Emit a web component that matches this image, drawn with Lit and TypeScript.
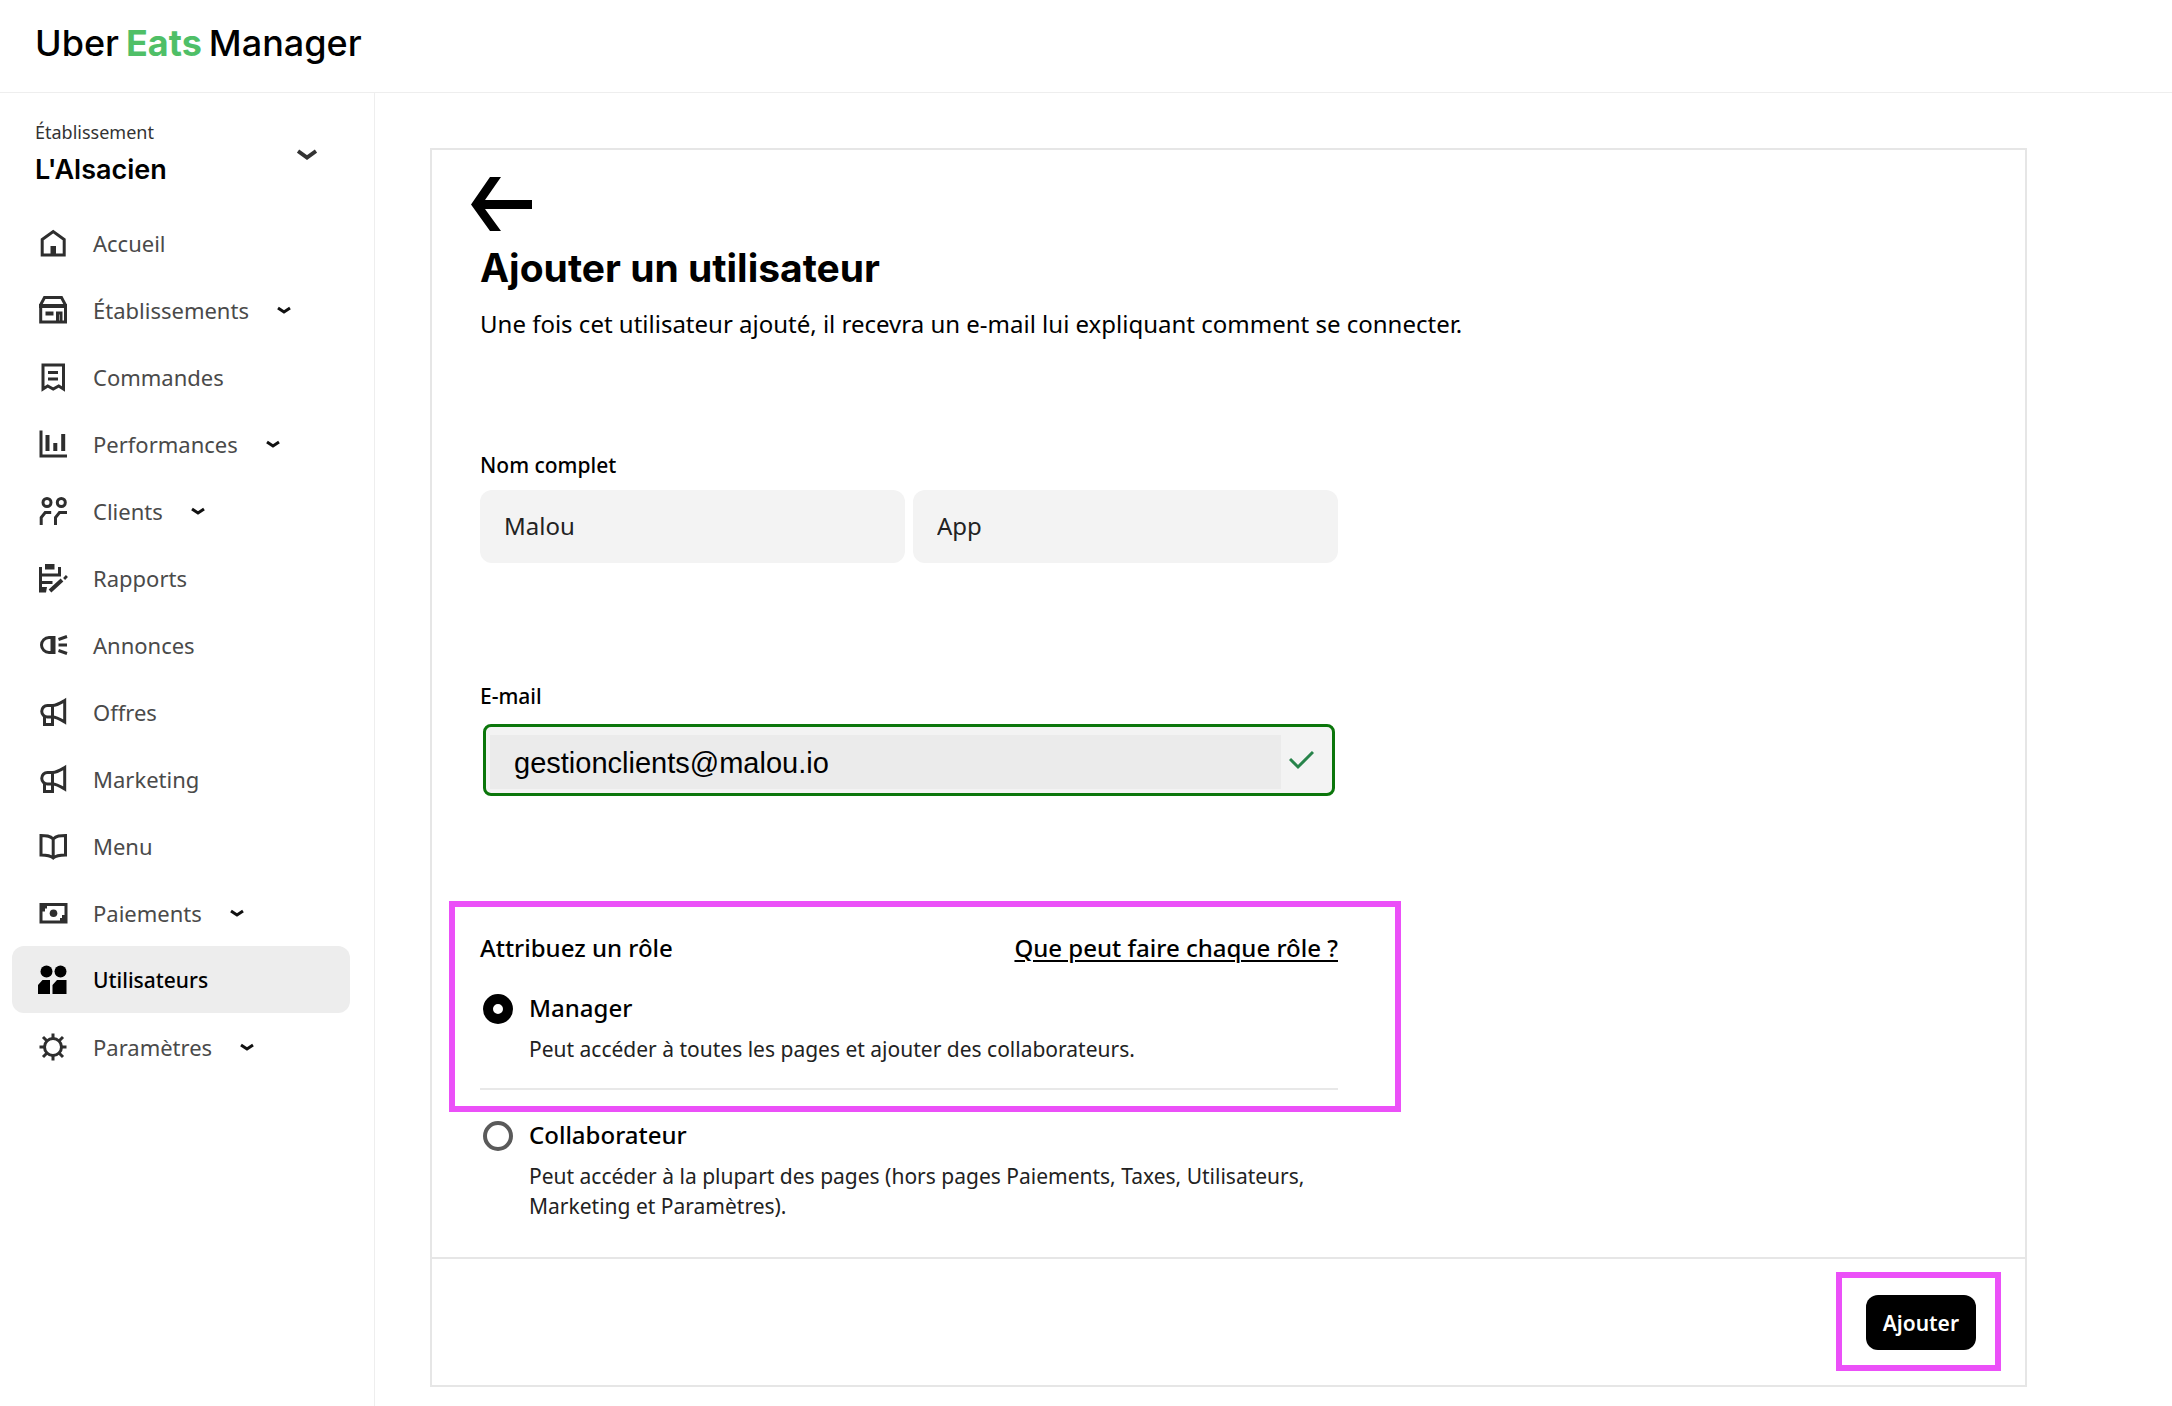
import { LitElement, html, css, svg, nothing } from "lit";
import { customElement, state } from "lit/decorators.js";
import { classMap } from "lit/directives/class-map.js";

const megaphone = svg`
  <path d="M14.500 8.500h-5a5.300 5.300 0 0 0 0 11.500h5c4 0 8 2.500 12.200 5V3.500c-4.200 2.500-8.200 5-12.200 5z" />
  <path d="M14.500 8.500v19H6.500V19.500" />
`;

const icons = {
  home: svg`<path d="M4.200 11.500 15.200 3.500l11 8v15.500h-22z" /><path class="solid" d="M12.500 18h5.500v8h-5.500z" />`,
  store: svg`
    <path d="M6.500 2.500h17l4 7.500v1h-25v-1z" />
    <path class="thick" d="M1 11h28" />
    <path d="M2.700 11v16h24.800v-16" />
    <path class="thick" d="M7.500 18.500h8" />
    <path d="M19.500 26.500V18h3.500v8.500" />
  `,
  receipt: svg`
    <path d="M5 3h20.500v24l-4.800-3-5.500 3-5.500-3-4.700 3z" />
    <path d="M10 10.500h10M10 17h10" />
  `,
  chart: svg`<path d="M3 1.500v25.500h26" /><path class="thick" d="M9.500 6v16M17.300 14v8M25.200 5v17" />`,
  people: svg`
    <circle cx="9" cy="6.500" r="4" /><circle cx="23.300" cy="6.500" r="4" />
    <path d="M3.200 29v-7.500l4-5h6M17.500 29v-7.500l4-5h7.500" />
  `,
  report: svg`
    <path d="M2.500 4v23.500M2.500 12h19V4M2.500 19.500h12" />
    <path class="solid" d="M7 1h9.500v5.500H7zM1 24h8l-1 5.500H1z" />
    <path class="thick" d="M12 28 24 17M26.500 13.500l2 2" />
  `,
  ad: svg`
    <path d="M16 7.500H11a7.500 7.500 0 0 0 0 15h5z" />
    <path class="thick" d="M14.500 7v16" />
    <path d="M20.500 9.500l8.500-3M20.500 15h8.500M20.500 20.500l8.500 3" />
  `,
  megaphone,
  book: svg`<path d="M3 4.500c5 0 9 0 12.200 3.500C18.500 4.500 22 4.500 27.500 4.500v19.500c-5 0-9 0-12.300 3C12 24 8 24 3 24zM15.200 8v18" />`,
  cash: svg`
    <path d="M3 6.500h25v17.500H3z" />
    <path class="solid" d="M3 6.500h6v4H7v3H3zM28 24h-6v-4h2v-3h4z" />
    <circle class="solid" cx="15.500" cy="15.200" r="3.800" />
  `,
  users: svg`
    <circle class="solid" cx="8.500" cy="6.500" r="6" /><circle class="solid" cx="22.500" cy="6.500" r="6" />
    <path class="solid" d="M0 29V20l4.500-5H12v14zM14.500 29V20l4.500-5h9.500v14z" />
  `,
  gear: svg`
    <circle cx="15" cy="15" r="8.500" />
    <path d="M15 1.500v5M15 23.500v5M1.500 15h5M23.500 15h5M5 5l4 4M21 21l4 4M5 25l4-4M21 9l4-4" />
  `,
};

type IconName = keyof typeof icons;

interface NavItem {
  label: string;
  icon: IconName;
  expandable?: boolean;
  active?: boolean;
}

const NAV: NavItem[] = [
  { label: "Accueil", icon: "home" },
  { label: "Établissements", icon: "store", expandable: true },
  { label: "Commandes", icon: "receipt" },
  { label: "Performances", icon: "chart", expandable: true },
  { label: "Clients", icon: "people", expandable: true },
  { label: "Rapports", icon: "report" },
  { label: "Annonces", icon: "ad" },
  { label: "Offres", icon: "megaphone" },
  { label: "Marketing", icon: "megaphone" },
  { label: "Menu", icon: "book" },
  { label: "Paiements", icon: "cash", expandable: true },
  { label: "Utilisateurs", icon: "users", active: true },
  { label: "Paramètres", icon: "gear", expandable: true },
];

const ROLES = [
  {
    id: "manager",
    label: "Manager",
    text: "Peut accéder à toutes les pages et ajouter des collaborateurs.",
  },
  {
    id: "collaborateur",
    label: "Collaborateur",
    text: "Peut accéder à la plupart des pages (hors pages Paiements, Taxes, Utilisateurs, Marketing et Paramètres).",
  },
];

@customElement("side-nav")
class SideNav extends LitElement {
  static styles = css`
    :host {
      display: block;
      box-sizing: border-box;
      padding: 24px 24px 24px 12px;
      border-right: 1px solid #eeeeee;
    }
    .store {
      display: flex;
      align-items: center;
      justify-content: space-between;
      box-sizing: border-box;
      width: 100%;
      padding: 0 33px 0 23px;
      margin-bottom: 16px;
      border: 0;
      background: none;
      font: inherit;
      text-align: left;
      color: #000;
    }
    .caption {
      display: block;
      font-size: 18px;
      line-height: 30px;
      color: #333;
    }
    .name {
      display: block;
      font: 600 27px/46px Inter, sans-serif;
    }
    .list {
      margin: 0;
      padding: 0;
      list-style: none;
    }
    .link {
      display: flex;
      align-items: center;
      height: 67px;
      padding: 0 26px;
      border-radius: 12px;
      font-size: 22px;
      color: #4a4a4a;
      text-decoration: none;
    }
    .active {
      background: #ededed;
      color: #000;
      font-size: 21px;
      font-weight: 500;
    }
    .icon {
      width: 30px;
      height: 30px;
      margin-right: 25px;
      fill: none;
      stroke: #2e2e2e;
      stroke-width: 3;
    }
    .active .icon {
      stroke: none;
    }
    .icon .solid {
      fill: #2e2e2e;
      stroke: none;
    }
    .active .icon .solid {
      fill: #000;
    }
    .icon .thick {
      stroke-width: 4;
    }
    .chevron {
      width: 14px;
      height: 10px;
      margin-left: 28px;
      fill: none;
      stroke: #111;
      stroke-width: 3;
    }
    .big {
      width: 20px;
      height: 14px;
      stroke: #333;
      stroke-width: 4;
    }
  `;

  render() {
    return html`
      <button class="store" type="button">
        <span><span class="caption">Établissement</span><span class="name">L'Alsacien</span></span>
        <svg class="chevron big" viewBox="0 0 20 14" aria-hidden="true"><path d="m1 3 9 6.500 9-6.500" /></svg>
      </button>
      <nav>
        <ul class="list">
          ${NAV.map(
            (item) => html`<li>
              <a class=${classMap({ link: true, active: !!item.active })} href="#">
                <svg class="icon" viewBox="0 0 30 30" aria-hidden="true">${icons[item.icon]}</svg>
                ${item.label}
                ${item.expandable
                  ? html`<svg class="chevron" viewBox="0 0 14 10" aria-hidden="true"><path d="m1 3 6 4 6-4" /></svg>`
                  : nothing}
              </a>
            </li>`,
          )}
        </ul>
      </nav>
    `;
  }
}

@customElement("user-form")
class UserForm extends LitElement {
  @state() private role = "manager";

  static styles = css`
    :host {
      display: block;
    }
    .card {
      border: 2px solid #e6e6e6;
    }
    .body {
      padding: 27px 48px 36px;
    }
    .back {
      display: block;
      margin: 0 0 0 -9px;
      padding: 0;
      border: 0;
      background: none;
    }
    .arrow {
      display: block;
      width: 62px;
      height: 54px;
    }
    .title {
      margin: 12px 0 0;
      font: 700 39px/50px Inter, sans-serif;
    }
    .lead {
      margin: 11px 0 0;
      font-size: 24px;
      line-height: 40px;
    }
    .fields {
      max-width: 858px;
    }
    .label {
      display: block;
      font-size: 21px;
      line-height: 30px;
      font-weight: 500;
    }
    .names {
      display: grid;
      grid-template-columns: 1fr 1fr;
      gap: 10px 8px;
      padding-top: 106px;
    }
    .names .label {
      grid-column: 1 / -1;
    }
    .text {
      box-sizing: border-box;
      width: 100%;
      height: 73px;
      padding: 0 24px 3px;
      border: 0;
      border-radius: 12px;
      background: #f3f3f3;
      font: inherit;
      font-size: 24px;
      color: #222;
    }
    .email {
      margin-top: 118px;
    }
    .valid {
      display: flex;
      align-items: center;
      box-sizing: border-box;
      height: 72px;
      margin: 13px 3px 0;
      padding: 8px 18px 4px 4px;
      gap: 8px;
      border: 3px solid #0b760b;
      border-radius: 8px;
      background: #f3f3f3;
    }
    .address {
      flex: 1;
      min-width: 0;
      height: 54px;
      box-sizing: border-box;
      padding: 2px 24px 0;
      border: 0;
      background: #ebebeb;
      font: 29px "Liberation Sans", Arial, sans-serif;
      color: #000;
    }
    .check {
      width: 25px;
      height: 20px;
      margin-bottom: 4px;
      fill: none;
      stroke: #27834a;
      stroke-width: 3;
    }
    .roles {
      position: relative;
      margin-top: 134px;
    }
    .heading {
      display: flex;
      justify-content: space-between;
      align-items: center;
      margin-bottom: 21px;
      font-size: 24px;
      line-height: 36px;
      font-weight: 500;
    }
    .heading h2 {
      margin: 0;
      font: inherit;
    }
    .help {
      color: #000;
      text-underline-offset: 3px;
      text-decoration-thickness: 2px;
    }
    .role {
      display: grid;
      grid-template-columns: 30px 1fr;
      column-gap: 16px;
      padding-left: 3px;
    }
    .role + .role {
      margin-top: 24px;
      padding-top: 24px;
      border-top: 2px solid #e8e8e8;
    }
    .radio {
      appearance: none;
      box-sizing: border-box;
      width: 30px;
      height: 30px;
      margin: 7px 0 0;
      border: 4px solid #5a5a5a;
      border-radius: 50%;
      background: #fff;
    }
    .radio:checked {
      border: 10px solid #000;
    }
    .role-name {
      font-size: 24px;
      line-height: 42px;
      font-weight: 500;
    }
    .role-text {
      grid-column: 2;
      margin: 5px 0 0;
      font-size: 21px;
      line-height: 30px;
      color: #222;
    }
    .footer {
      display: flex;
      justify-content: flex-end;
      padding: 36px 49px 35px;
      border-top: 2px solid #e6e6e6;
    }
    .action {
      position: relative;
    }
    .submit {
      height: 55px;
      padding: 0 17px;
      border: 0;
      border-radius: 12px;
      background: #000;
      color: #fff;
      font: inherit;
      font-size: 21px;
      font-weight: 600;
    }
    .mark {
      position: absolute;
      border: 6px solid #eb50f8;
      pointer-events: none;
    }
    .mark-role {
      inset: -29px -63px auto -31px;
      height: 199px;
    }
    .mark-submit {
      inset: -23px -25px -21px -30px;
    }
  `;

  render() {
    return html`
      <form class="card" @submit=${(e: Event) => e.preventDefault()}>
        <div class="body">
          <button class="back" type="button" aria-label="Retour">
            <svg class="arrow" viewBox="0 0 62 54" aria-hidden="true">
              <path d="M19 0h11L14 23h47v9H14l16 22H19L0 27.500z" />
            </svg>
          </button>
          <h1 class="title">Ajouter un utilisateur</h1>
          <p class="lead">
            Une fois cet utilisateur ajouté, il recevra un e-mail lui expliquant comment se connecter.
          </p>
          <div class="fields">
            <div class="names">
              <label class="label" for="first">Nom complet</label>
              <input class="text" id="first" .value=${"Malou"} />
              <input class="text" id="last" aria-label="Nom de famille" .value=${"App"} />
            </div>
            <div class="email">
              <label class="label" for="email">E-mail</label>
              <div class="valid">
                <input class="address" id="email" type="email" .value=${"gestionclients@malou.io"} />
                <svg class="check" viewBox="0 0 25 20" aria-hidden="true"><path d="m1 9 8 8L24 2" /></svg>
              </div>
            </div>
            <section class="roles">
              <div class="heading">
                <h2>Attribuez un rôle</h2>
                <a class="help" href="#">Que peut faire chaque rôle ?</a>
              </div>
              ${ROLES.map(
                (r) => html`<div class="role">
                  <input
                    class="radio"
                    type="radio"
                    name="role"
                    id=${r.id}
                    .checked=${this.role === r.id}
                    @change=${() => (this.role = r.id)}
                  />
                  <label class="role-name" for=${r.id}>${r.label}</label>
                  <p class="role-text">${r.text}</p>
                </div>`,
              )}
              <div class="mark mark-role"></div>
            </section>
          </div>
        </div>
        <div class="footer">
          <div class="action">
            <button class="submit" type="submit">Ajouter</button>
            <div class="mark mark-submit"></div>
          </div>
        </div>
      </form>
    `;
  }
}

@customElement("app-root")
class AppRoot extends LitElement {
  static styles = css`
    :host {
      display: flex;
      flex-direction: column;
      min-height: 100vh;
      background: #fff;
      color: #000;
      font-family: "Noto Sans", sans-serif;
    }
    .header {
      display: flex;
      align-items: center;
      padding: 19px 35px 25px;
      border-bottom: 1px solid #eeeeee;
      font: 500 36px/48px Inter, sans-serif;
    }
    .brand {
      display: flex;
      gap: 7px;
      color: #000;
      text-decoration: none;
    }
    .green {
      color: #4fbf67;
      font-weight: 700;
    }
    .layout {
      display: grid;
      grid-template-columns: 375px 1fr;
      flex: 1;
    }
    .content {
      padding: 55px 145px 18px 55px;
    }
  `;

  render() {
    return html`
      <header class="header">
        <a class="brand" href="#"><span>Uber</span> <span class="green">Eats</span> <span>Manager</span></a>
      </header>
      <div class="layout">
        <side-nav></side-nav>
        <main class="content"><user-form></user-form></main>
      </div>
    `;
  }
}
